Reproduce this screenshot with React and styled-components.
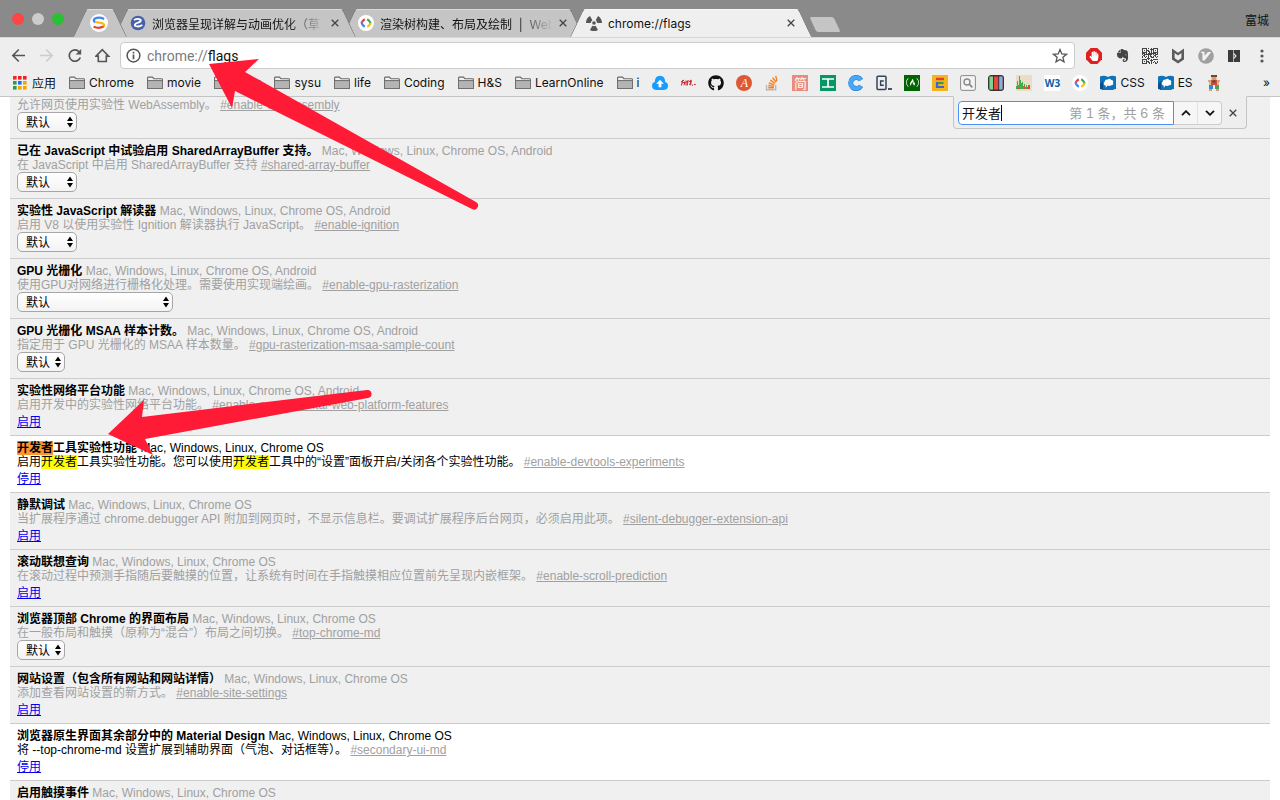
import React from "react";
import styled, { createGlobalStyle, css } from "styled-components";
import { FaGithub, FaEvernote, FaHandPaper, FaFreeCodeCamp } from "react-icons/fa";

const ui = 'Inter, "Noto Sans CJK SC", sans-serif';
const page = '"Liberation Sans", "Noto Sans CJK SC", sans-serif';

const Global = createGlobalStyle`
  * { box-sizing: border-box; }
  body { margin: 0; background: #fff; }
  button { font: inherit; color: inherit; border: 0; padding: 0; background: none; }
  svg { display: block; flex: none; }
`;

const Browser = styled.div`
  position: relative;
  display: flex;
  flex-direction: column;
  height: 100vh;
  overflow: hidden;
  font-family: ${ui};
  font-size: 12px;
  color: #111;
`;

/* Tab strip */
const TabStrip = styled.header`
  display: flex;
  flex: none;
  height: 37px;
  align-items: flex-end;
  background: #8a8a8a;
`;
const WindowButtons = styled.div`
  display: flex;
  gap: 8px;
  width: 73px;
  padding: 0 0 12px 12px;
`;
const WindowButton = styled.button`
  width: 12px;
  height: 12px;
  border-radius: 50%;
  background: ${(p) => p.$color};
`;
const slant = css`
  content: "";
  position: absolute;
  z-index: -1;
  top: 0;
  bottom: 0;
  background: ${(p) => (p.$active ? "#efefef" : "#c5c5c5")};
  border-top: 1px solid ${(p) => (p.$active ? "#f8f8f8" : "#dadada")};
`;
const Tab = styled.div`
  position: relative;
  isolation: isolate;
  z-index: ${(p) => p.$level};
  display: flex;
  flex: none;
  align-items: center;
  gap: 6px;
  width: ${(p) => (p.$pinned ? 54 : 241)}px;
  height: 28px;
  margin-right: -13px;
  padding: 0 ${(p) => (p.$pinned ? 17 : 16)}px;
  &::before {
    ${slant}
    left: 0;
    right: 50%;
    border-left: 1px solid #777;
    border-top-left-radius: 3px;
    transform: skewX(-25deg);
    transform-origin: bottom;
  }
  &::after {
    ${slant}
    left: 50%;
    right: 0;
    border-right: 1px solid #777;
    border-top-right-radius: 3px;
    transform: skewX(25deg);
    transform-origin: bottom;
  }
`;
const TabTitle = styled.span`
  flex: 1;
  min-width: 0;
  overflow: hidden;
  white-space: nowrap;
  ${(p) => p.$fade && "mask-image: linear-gradient(90deg, #000 78%, transparent 100%);"}
`;
const NewTab = styled.button`
  width: 24px;
  height: 15px;
  margin: 0 0 5px 15px;
  border-radius: 2px;
  background: #c5c5c5;
  transform: skewX(25deg);
`;
const Profile = styled.button`
  margin: 0 11px 9px auto;
`;

/* Toolbar */
const Toolbar = styled.div`
  flex: none;
  padding-top: 4px;
  background: #eee;
  border-top: 1px solid #d6d6d6;
  border-bottom: 1px solid #c4c4c4;
`;
const AddressRow = styled.div`
  display: flex;
  align-items: center;
  gap: 12px;
  padding: 0 10px 0 11px;
`;
const IconButton = styled.button`
  display: grid;
  place-items: center;
  flex: none;
  width: 16px;
  height: 16px;
`;
const AddressBar = styled.div`
  display: flex;
  flex: 1;
  align-items: center;
  gap: 6px;
  height: 27px;
  margin: 0 -1px 0 -3px;
  padding: 0 6px 0 5px;
  background: #fff;
  border: 1px solid #ccc;
  border-radius: 4px;
`;
const Url = styled.a`
  flex: 1;
  font: 14px/20px Roboto, sans-serif;
  color: #111;
  text-decoration: none;
  span { color: #7b7b7b; }
`;
const Bookmarks = styled.nav`
  display: flex;
  align-items: center;
  gap: 12px;
  height: 27px;
  padding: 0 10px 0 13px;
`;
const Bookmark = styled.a`
  display: flex;
  flex: none;
  align-items: center;
  gap: ${(p) => (p.$apps ? 5 : 4)}px;
  padding-right: ${(p) => (p.$labelled ? 1 : 0)}px;
  color: #111;
  text-decoration: none;
  white-space: nowrap;
`;
const More = styled.button`
  margin-left: auto;
`;
const Tile = styled.span`
  display: grid;
  place-items: center;
  width: 16px;
  height: 16px;
  border-radius: ${(p) => p.$round || 0}px;
  background: ${(p) => p.$bg || "none"};
  color: ${(p) => p.$color || "#fff"};
  font: ${(p) => p.$font || `13px/16px ${ui}`};
  white-space: nowrap;
`;

/* Find bar */
const FindBar = styled.form`
  position: absolute;
  z-index: 2;
  top: 96px;
  right: 33px;
  display: flex;
  align-items: center;
  width: 294px;
  height: 33px;
  padding: 0 9px 0 4px;
  background: #eee;
  border: 1px solid #c4c4c4;
  border-top-color: #eee;
  border-radius: 0 0 4px 4px;
`;
const FindField = styled.label`
  display: flex;
  align-items: center;
  width: 216px;
  height: 24px;
  padding: 0 8px 0 3px;
  background: #fff;
  border: 1px solid #4a90f5;
  border-radius: 4px 0 0 4px;
  font-size: 13px;
  color: #a0a0a0;
  white-space: nowrap;
`;
const FindInput = styled.input`
  width: 40px;
  height: 16px;
  padding: 0;
  border: 0;
  border-right: 1px solid #000;
  outline: 0;
  font: 13px/16px ${ui};
  color: #111;
`;
const FindCount = styled.span`
  margin-left: auto;
  font-variant-numeric: tabular-nums;
`;
const FindStep = styled.button`
  display: grid;
  place-items: center;
  width: 24px;
  height: 24px;
  background: #f6f6f6;
  border: 1px solid #ccc;
  border-left-width: 0;
  border-right-color: ${(p) => (p.$last ? "#ccc" : "#e2e2e2")};
  border-radius: ${(p) => (p.$last ? "0 4px 4px 0" : 0)};
`;
const FindClose = styled.button`
  margin-left: auto;
`;

/* Flags list */
const FlagList = styled.main`
  flex: 1;
  min-height: 0;
  overflow: hidden;
  padding: 0 10px;
  font: 12px/14px ${page};
`;
const Flag = styled.section`
  padding: 5px 7px 6px;
  border-bottom: 1px solid #ccc;
  background: ${(p) => (p.$on ? "#fff" : "#f0f0f0")};
  color: ${(p) => (p.$on ? "#000" : "#a0a0a0")};
  &:first-child { padding-top: 1px; }
`;
const Line = styled.div`
  height: 14px;
  white-space: nowrap;
`;
const FlagName = styled.strong`
  color: #000;
`;
const Anchor = styled.a`
  color: #a0a0a0;
`;
const Toggle = styled.a`
  display: block;
  width: max-content;
  height: 14px;
  margin-top: 3px;
  color: #00e;
`;
const Mark = styled.mark`
  background: ${(p) => (p.$current ? "#ff9632" : "#ff0")};
  color: inherit;
`;
const Picker = styled.div`
  position: relative;
  width: ${(p) => p.$width}px;
  height: 20px;
  svg { position: absolute; right: 3px; top: 4px; pointer-events: none; }
`;
const Select = styled.select`
  appearance: none;
  display: block;
  width: 100%;
  height: 20px;
  padding: 2px 0 0 8px;
  border: 1px solid #a6a6a6;
  border-radius: 5px;
  background: linear-gradient(#fff, #f3f3f3);
  font: 12px/16px ${page};
  color: #000;
`;
const Arrows = styled.svg`
  position: absolute;
  z-index: 3;
  top: 0;
  left: 0;
  pointer-events: none;
`;

const Cross = () => (
  <svg width="8" height="8" viewBox="0 0 8 8" stroke="#444" strokeWidth="1.3"><path d="M.7.7l6.6 6.6M7.3.7L.7 7.3" /></svg>
);
const Folder = () => (
  <svg width="16" height="14" viewBox="0 0 16 14">
    <path d="M.6 12.5V2q0-.9.9-.9h4l1.4 1.6h7.6q.9 0 .9.9v8.9z" fill="#f2f2f2" stroke="#696969" strokeWidth="1.1" />
    <path d="M1 4.8h14v7.3H1z" fill="#b4b4b4" /><path d="M.6 4.6h14.8" stroke="#696969" />
  </svg>
);
const Google = () => (
  <svg width="16" height="16" viewBox="0 0 16 16" fill="none" strokeWidth="2.2">
    <circle cx="8" cy="8" r="8" fill="#fff" />
    <path d="M6.8 4.2Q4.7 5.4 3.5 8" stroke="#ea4335" /><path d="M3.4 7.4Q4.5 10.8 6.8 11.8" stroke="#4285f4" />
    <path d="M9.2 4.2Q11.6 5.4 12.6 8.3" stroke="#34a853" /><path d="M12.6 7.8Q11.5 10.8 9.2 11.8" stroke="#fbbc05" />
  </svg>
);
const Radiation = () => (
  <svg width="16" height="16" viewBox="0 0 16 16">
    <circle cx="8" cy="8" r="5.6" fill="none" stroke="#555" strokeWidth="4.8" pathLength="6" strokeDasharray="1 1" transform="rotate(60 8 8)" />
    <circle cx="8" cy="8" r="1.8" fill="#555" />
  </svg>
);
const Sogou = () => (
  <svg width="18" height="18" viewBox="0 0 16 16" fill="none" strokeWidth="2">
    <circle cx="8" cy="8" r="8" fill="#fff" />
    <path d="M12.6 4.4Q8 2.3 4.5 4Q2 6 5 7.3" stroke="#4285f4" /><path d="M4.5 7.1L11 8.2" stroke="#fbbc05" /><path d="M10.5 8Q14 9.5 11.6 11.4" stroke="#fbbc05" /><path d="M12 11.1Q8 13.3 3.2 11.3" stroke="#ea4335" />
  </svg>
);
const BlueSwirl = () => (
  <svg width="16" height="16" viewBox="0 0 16 16">
    <circle cx="8" cy="8" r="7.3" fill="#4661a8" />
    <path d="M4 5Q8 2.6 10.8 5Q11 7 7 8Q4.3 9.2 5 10.8Q8 12.5 12.4 10" fill="none" stroke="#fff" strokeWidth="1.8" />
  </svg>
);
const Apps = () => (
  <svg width="14" height="14" viewBox="0 0 14 14">
    {["#f22", "#e22", "#e22", "#2a9d4b", "#1a73e8", "#f5a300", "#2a9d4b", "#f5a300", "#f5a300"].map((c, i) => (
      <rect key={i} x={(i % 3) * 5} y={Math.floor(i / 3) * 5} width="3.6" height="3.6" fill={c} />
    ))}
  </svg>
);
const CloudUp = () => (
  <svg width="16" height="16" viewBox="0 0 16 16">
    <path d="M4 15Q0 14.6 0 10.8 0 7.6 2.8 7 3 .8 8 .8T13.2 7Q16 7.6 16 10.8 16 14.6 12 15z" fill="#179cff" />
    <path d="M8 4.8l3.8 4H9.4v3.4H6.6V8.800H4.200z" fill="#fff" />
  </svg>
);
const Scribble = () => (
  <svg width="16" height="16" viewBox="0 0 16 16" fill="none" stroke="#c5202b" strokeWidth="1">
    <path d="M1 7l3-2M3 5L1.3 10.5M2.5 8l2.3-1-.8 3.3M6 5.5v5M5.5 7.5l2.5-1.3M8.2 5l-1 5.5M9 6.5l2.5-.7-2 4.2M10.8 4.8v5.5M12 9.800l1 .7M14 9.500h1.700" />
  </svg>
);
const Stack = () => (
  <svg width="16" height="16" viewBox="0 0 16 16" fill="none">
    <path d="M2.500 10v4.700h9.200V10" stroke="#b5b9bd" strokeWidth="1.400" />
    <path d="M4.200 12.700h5.800M4.300 10.500l5.700.9M4.800 8l5.500 1.800M6.300 5.200l4.800 3.100M8.500 2.700l3.800 4.300M11.700.9L13 6" stroke="#f48024" strokeWidth="1.400" />
  </svg>
);
const WorkMark = () => (
  <svg width="16" height="16" viewBox="0 0 16 16"><path fill="#079767" d="M0 0h16v16H0z" /><path d="M2 4h12M8 4v8M2 12h12" stroke="#fff" strokeWidth="1.7" /></svg>
);
const BlueC = () => (
  <svg width="16" height="16" viewBox="0 0 16 16" fill="none"><path d="M13 5A5.600 5.600 0 1 0 13 11" stroke="#257fc9" strokeWidth="5" /><path d="M13 5.200A5.600 5.600 0 1 0 13 10.800" stroke="#45a8fa" strokeWidth="4" /></svg>
);
const Codecademy = () => (
  <svg width="16" height="16" viewBox="0 0 16 16" fill="none" stroke="#31455b"><rect x="1" y="1.2" width="9" height="13.2" rx="1" strokeWidth="1.5" /><path d="M7.8 6H4.6v4.2h3.2" strokeWidth="1.4" /><path d="M12 14h4" strokeWidth="1.8" /></svg>
);
const EMark = () => (
  <svg width="16" height="16" viewBox="0 0 16 16" fill="none"><path fill="#f3b51b" d="M0 0h16v16H0z" /><path d="M4 4h8" stroke="#e53935" strokeWidth="2.4" /><path d="M4 8h7.5" stroke="#2e9e49" strokeWidth="2.2" /><path d="M5 7v5h7" stroke="#3e64d8" strokeWidth="2.2" /></svg>
);
const SearchBox = () => (
  <svg width="16" height="16" viewBox="0 0 16 16" fill="none" stroke="#8a8a8a"><rect x=".6" y=".6" width="14.8" height="14.8" rx="1.5" fill="#f3f3f3" /><circle cx="7" cy="7" r="3" strokeWidth="1.4" /><path d="M9.2 9.2l3.2 3.2" strokeWidth="1.7" /></svg>
);
const Stripes = () => (
  <svg width="16" height="16" viewBox="0 0 16 16"><rect x=".7" y=".7" width="14.6" height="14.6" rx="2.5" fill="#e84545" stroke="#343434" strokeWidth="1.4" /><path d="M1.5 1.5H5v13H1.5z" fill="#79d68b" /><path d="M11 1.5h3.5v13H11z" fill="#7eb1e4" /><path d="M5.500 1v14M10.700 1v14" stroke="#343434" /></svg>
);
const Histogram = () => (
  <svg width="16" height="16" viewBox="0 0 16 16"><path fill="#ebdcc6" d="M0 0h16v16H0z" /><path d="M0 14v-3h1V6h1v4h1V1h1v4h1v3h1V7h1v4h1v-2h1v3h1v-2h1v4z" fill="#42ad4d" /><path d="M1 13h3v1H1zM8 11h1v3H8zM11 12h1v-2h2v4h-3z" fill="#d94b40" /></svg>
);
const Book = () => (
  <svg width="16" height="16" viewBox="0 0 16 16"><path d="M0 1.500q4-1.800 8 .4 4-2.200 8-.4V14q-2 0-3 1H3q-1-1-3-1z" fill="#0e73b9" /><path d="M0 9l3-3v9q-1-1-3-1z" fill="#084f8c" /><path d="M4 9.400q-1-1.600.6-2.700Q5 4 7.800 4.500q2-1.500 3.400.4Q14 5 13 7.500q1 2.600-1.700 2.800-2 1.400-3.700.3-1 1.400-2 2.200.4-1.700 0-2.400-1.300-.1-1.600-1z" fill="#fff" /></svg>
);
const Person = () => (
  <svg width="16" height="16" viewBox="0 0 16 16"><path d="M3 6h10v4H3z" fill="#e3b18a" /><path d="M5.500 1h5v4.500h-5z" fill="#d99c70" /><path d="M5 0h6v2H5z" fill="#76452d" /><path d="M2 5h12v2H2z" fill="#dca67e" /><path d="M5 5.200h6V10H5z" fill="#d6493c" /><path d="M6.500 5.200h3v2.500h-3z" fill="#7b3f30" /><path d="M3 10h4v4H3z" fill="#348bc7" /><path d="M9 10h4v4H9z" fill="#4aa35b" /><path d="M3 14h3v2H3zM10 14h3v2h-3z" fill="#d99c70" /></svg>
);
const Blocker = () => (
  <svg width="16" height="16" viewBox="0 0 16 16"><path d="M4.7 0h6.6L16 4.7v6.6L11.3 16H4.7L0 11.3V4.7z" fill="#e02020" /><FaHandPaper x="3" y="3" size="10" color="#fff" /></svg>
);
const Qr = () => {
  const cells = [];
  for (let y = 0; y < 16; y++)
    for (let x = 0; x < 16; x++) {
      const corner = (x < 5 && y < 5) || (x > 10 && y < 5) || (x < 5 && y > 10);
      if (!corner && (x * x * 13 + y * y * 7 + x * y * 5 + x * 3 + y) % 11 < 6) cells.push(<rect key={x + "-" + y} x={x} y={y} width="1" height="1" />);
    }
  return (
    <svg width="16" height="16" viewBox="0 0 16 16" fill="#444">
      {cells}
      {[[0, 0], [11, 0], [0, 11]].map(([x, y]) => (
        <g key={x + "-" + y}><rect x={x + 0.5} y={y + 0.5} width="4" height="4" fill="none" stroke="#444" /><rect x={x + 2} y={y + 2} width="1" height="1" /></g>
      ))}
    </svg>
  );
};
const Shield = () => (
  <svg width="16" height="16" viewBox="0 0 16 16"><path d="M2 .5l6 4.200 6-4.200v11L8 15.500l-6-4zM4.600 5v5.100L8 12.500l3.400-2.400V5L8 7.600z" fill="#5c5c5c" fillRule="evenodd" /></svg>
);
const GreyV = () => (
  <svg width="16" height="16" viewBox="0 0 16 16"><circle cx="8" cy="8" r="7.8" fill="#a0a0a0" /><path d="M3 3.800h3.500v4L10 4h3.300L6.600 12.500H4.400V5H3z" fill="#f2f2f2" /></svg>
);
const DarkBlocks = () => (
  <svg width="16" height="16" viewBox="0 0 16 16"><path d="M2 2h5v12H2zM7.600 2H14v12H7.600z" fill="#3c3c3c" /><path d="M7.500 5.500L10 8l-2.500 2.500" fill="none" stroke="#eee" strokeWidth="1.100" /></svg>
);

const bookmarks = [
  ["Chrome", <Folder />], ["movie", <Folder />], ["tools", <Folder />], ["sysu", <Folder />], ["life", <Folder />],
  ["Coding", <Folder />], ["H&S", <Folder />], ["LearnOnline", <Folder />], ["i", <Folder />],
  ["", <CloudUp />], ["", <Scribble />], ["", <FaGithub size={16} />],
  ["", <Tile $bg="#de5833" $round={8} $font='italic 12px/16px "Liberation Serif", serif'>A</Tile>],
  ["", <Stack />], ["", <Tile $bg="#e98c7d">简</Tile>], ["", <WorkMark />], ["", <BlueC />], ["", <Codecademy />],
  ["", <Tile $bg="#006400"><FaFreeCodeCamp size={13} /></Tile>],
  ["", <EMark />], ["", <SearchBox />], ["", <Stripes />], ["", <Histogram />],
  ["", <Tile $bg="#fff" $color="#0b5ea8" $font='bold 10px/16px "Open Sans", sans-serif'>W3</Tile>],
  ["", <Google />], ["CSS", <Book />], ["ES", <Book />], ["", <Person />],
];

const MWLCA = "Mac, Windows, Linux, Chrome OS, Android";
const MWLC = "Mac, Windows, Linux, Chrome OS";
const flags = [
  { desc: "允许网页使用实验性 WebAssembly。", id: "enable-webassembly", select: 60 },
  { name: "已在 JavaScript 中试验启用 SharedArrayBuffer 支持。", os: MWLCA, desc: "在 JavaScript 中启用 SharedArrayBuffer 支持", id: "shared-array-buffer", select: 60 },
  { name: "实验性 JavaScript 解读器", os: MWLCA, desc: "启用 V8 以使用实验性 Ignition 解读器执行 JavaScript。", id: "enable-ignition", select: 60 },
  { name: "GPU 光栅化", os: MWLCA, desc: "使用GPU对网络进行栅格化处理。需要使用实现端绘画。", id: "enable-gpu-rasterization", select: 156 },
  { name: "GPU 光栅化 MSAA 样本计数。", os: MWLCA, desc: "指定用于 GPU 光栅化的 MSAA 样本数量。", id: "gpu-rasterization-msaa-sample-count", select: 48 },
  { name: "实验性网络平台功能", os: MWLCA, desc: "启用开发中的实验性网络平台功能。", id: "enable-experimental-web-platform-features" },
  {
    name: <><Mark $current>开发者</Mark>工具实验性功能</>, os: MWLC, on: true,
    desc: <>启用<Mark>开发者</Mark>工具实验性功能。您可以使用<Mark>开发者</Mark>工具中的“设置”面板开启/关闭各个实验性功能。</>,
    id: "enable-devtools-experiments",
  },
  { name: "静默调试", os: MWLC, desc: "当扩展程序通过 chrome.debugger API 附加到网页时，不显示信息栏。要调试扩展程序后台网页，必须启用此项。", id: "silent-debugger-extension-api" },
  { name: "滚动联想查询", os: MWLC, desc: "在滚动过程中预测手指随后要触摸的位置，让系统有时间在手指触摸相应位置前先呈现内嵌框架。", id: "enable-scroll-prediction" },
  { name: "浏览器顶部 Chrome 的界面布局", os: MWLC, desc: "在一般布局和触摸（原称为“混合”）布局之间切换。", id: "top-chrome-md", select: 48 },
  { name: "网站设置（包含所有网站和网站详情）", os: MWLC, desc: "添加查看网站设置的新方式。", id: "enable-site-settings" },
  { name: "浏览器原生界面其余部分中的 Material Design", os: MWLC, on: true, desc: "将 --top-chrome-md 设置扩展到辅助界面（气泡、对话框等）。", id: "secondary-ui-md" },
  { name: "启用触摸事件", os: MWLC, id: "touch-events" },
];

const FlagRow = ({ flag: f }) => (
  <Flag $on={f.on}>
    {f.name && <Line><FlagName>{f.name}</FlagName> {f.os}</Line>}
    {f.desc && <Line>{f.desc} <Anchor href={"#" + f.id}>#{f.id}</Anchor></Line>}
    {f.desc && f.select && (
      <Picker $width={f.select}>
        <Select aria-label={f.id}><option>默认</option></Select>
        <svg width="8" height="12" viewBox="0 0 8 12"><path d="M4 .5L7 5H1zM4 11.5L1 7h6z" /></svg>
      </Picker>
    )}
    {f.desc && !f.select && <Toggle href={"#" + f.id}>{f.on ? "停用" : "启用"}</Toggle>}
  </Flag>
);

export default function App() {
  return (
    <Browser>
      <Global />
      <TabStrip>
        <WindowButtons>
          <WindowButton $color="#fc4646" aria-label="关闭" />
          <WindowButton $color="#ccc" aria-label="最小化" />
          <WindowButton $color="#28c131" aria-label="缩放" />
        </WindowButtons>
        <Tab $pinned $level={3}><Sogou /></Tab>
        <Tab $level={2}><BlueSwirl /><TabTitle $fade>浏览器呈现详解与动画优化（草</TabTitle><button aria-label="关闭标签页"><Cross /></button></Tab>
        <Tab $level={1}><Google /><TabTitle $fade>渲染树构建、布局及绘制 &nbsp;|&nbsp; Web</TabTitle><button aria-label="关闭标签页"><Cross /></button></Tab>
        <Tab $active $level={4}><Radiation /><TabTitle>chrome://flags</TabTitle><button aria-label="关闭标签页"><Cross /></button></Tab>
        <NewTab aria-label="新标签页" />
        <Profile>富城</Profile>
      </TabStrip>

      <Toolbar>
        <AddressRow>
          <IconButton aria-label="后退"><svg width="16" height="16" viewBox="0 0 16 16" fill="none" stroke="#555" strokeWidth="1.6"><path d="M14 7.500H2M7.800 1.500L1.800 7.500l6 6" /></svg></IconButton>
          <IconButton aria-label="前进"><svg width="16" height="16" viewBox="0 0 16 16" fill="none" stroke="#ccc" strokeWidth="1.6"><path d="M1 7.500h12M7.200 1.500l6 6-6 6" /></svg></IconButton>
          <IconButton aria-label="重新加载"><svg width="16" height="16" viewBox="0 0 16 16"><path d="M13.300 9.500A5.700 5.700 0 1 1 12.200 3.700" fill="none" stroke="#555" strokeWidth="1.7" /><path d="M14.200 1v5.500H8.700z" fill="#555" /></svg></IconButton>
          <IconButton aria-label="主页"><svg width="16" height="16" viewBox="0 0 16 16" fill="none" stroke="#555" strokeWidth="1.6"><path d="M1 8.100h2.300v5.400h8V8.100h2.300L7.300 1.700z" /></svg></IconButton>
          <AddressBar>
            <svg width="15" height="15" viewBox="0 0 16 16" fill="none" stroke="#555" strokeWidth="1.6"><circle cx="8" cy="8" r="6.8" /><path d="M8 7v5M8 4v1.800" strokeWidth="1.8" /></svg>
            <Url href="#flags"><span>chrome://</span>flags</Url>
            <IconButton aria-label="收藏"><svg width="16" height="16" viewBox="0 0 16 16" fill="none" stroke="#555" strokeWidth="1.3"><path d="M8 1.600l1.800 4.300 4.700.4-3.600 3 1.100 4.600L8 11.400l-4 2.500 1.100-4.600-3.600-3 4.700-.4z" /></svg></IconButton>
          </AddressBar>
          <IconButton aria-label="广告拦截"><Blocker /></IconButton>
          <IconButton aria-label="Evernote"><FaEvernote size={15} color="#444" /></IconButton>
          <IconButton aria-label="二维码"><Qr /></IconButton>
          <IconButton aria-label="McAfee"><Shield /></IconButton>
          <IconButton aria-label="Vysor"><GreyV /></IconButton>
          <IconButton aria-label="扩展程序"><DarkBlocks /></IconButton>
          <IconButton aria-label="菜单"><svg width="16" height="16" viewBox="0 0 16 16" fill="#555"><circle cx="8" cy="3" r="1.600" /><circle cx="8" cy="8" r="1.600" /><circle cx="8" cy="13" r="1.600" /></svg></IconButton>
        </AddressRow>
        <Bookmarks>
          <Bookmark $apps $labelled href="#apps"><Apps />应用</Bookmark>
          {bookmarks.map(([label, icon], i) => (
            <Bookmark key={i} $labelled={!!label} href="#bookmark" aria-label={label || "书签"}>{icon}{label}</Bookmark>
          ))}
          <More aria-label="更多书签">»</More>
        </Bookmarks>
      </Toolbar>

      <FindBar>
        <FindField>
          <FindInput aria-label="查找" defaultValue="开发者" />
          <FindCount>第 1 条，共 6 条</FindCount>
        </FindField>
        <FindStep type="button" aria-label="上一个"><svg width="10" height="6" viewBox="0 0 10 6" fill="none" stroke="#111" strokeWidth="1.8"><path d="M1 5.200l4-4 4 4" /></svg></FindStep>
        <FindStep $last type="button" aria-label="下一个"><svg width="10" height="6" viewBox="0 0 10 6" fill="none" stroke="#111" strokeWidth="1.8"><path d="M1 .8l4 4 4-4" /></svg></FindStep>
        <FindClose type="button" aria-label="关闭查找栏"><Cross /></FindClose>
      </FindBar>

      <FlagList>
        {flags.map((f) => <FlagRow key={f.id} flag={f} />)}
      </FlagList>

      <Arrows width="480" height="460" viewBox="0 0 480 460" fill="#ff1a35" aria-hidden="true">
        <path d="M209 64L259 59L245 72L476 202A4 4 0 0 1 472 209L235 91L232 108Z" />
        <path d="M108 434L144 400L142 417L367 390A4 4 0 0 1 368 398L145 439L153 455Z" />
      </Arrows>
    </Browser>
  );
}
